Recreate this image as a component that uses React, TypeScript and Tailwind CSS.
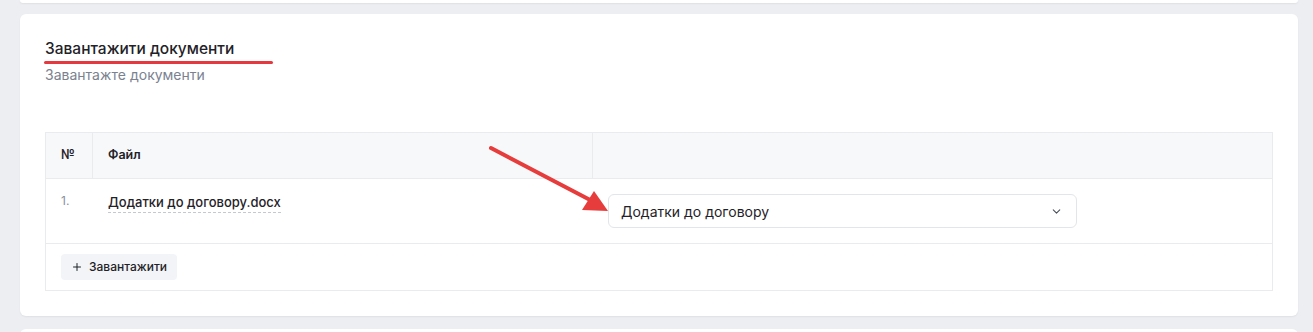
import { ChevronDown, Plus } from "lucide-react"

const font = { fontFamily: "Inter, 'Noto Sans', sans-serif" }

export default function App() {
  return (
    <div className="h-[332px] overflow-hidden bg-[#eceef2]" style={font}>
      {/* попередня картка */}
      <div className="ml-[20px] h-[3px] w-[1278px] rounded-b-md bg-white shadow-[0_1px_2px_rgba(0,0,0,0.06)]" />

      <div className="relative ml-[20px] mt-[11px] w-[1278px] rounded-md bg-white px-[25px] pt-[22px] pb-[25px] shadow-[0_1px_2px_rgba(0,0,0,0.06)]">
        <div className="inline-block">
          <h2 className="text-[15.5px] leading-[22px] font-medium text-[#1f2228]">Завантажити документи</h2>
          <div className="mt-[1px] ml-[-1px] h-[3px] w-[229px] rounded-full bg-[#e5393f]" />
        </div>
        <p className="mt-[1px] text-[14px] leading-[20px] text-[#7a8290]">Завантажте документи</p>

        <div className="mt-[47px] border border-[#e9ebef]">
          <div className="flex h-[46px] border-b border-[#e9ebef] bg-[#f7f8fa] text-[12.5px] font-semibold text-[#1f2228]">
            <div className="flex w-[47px] items-center border-r border-[#e9ebef] pl-[15px]">№</div>
            <div className="flex w-[500px] items-center border-r border-[#e9ebef] pl-[15px]">Файл</div>
            <div className="flex-1" />
          </div>
          <div className="flex h-[65px] border-b border-[#e9ebef]">
            <div className="w-[47px] pl-[15px] pt-[13px] text-[12px] leading-[18px] text-[#8a919c]">1.</div>
            <div className="w-[500px] pl-[15px] pt-[13px] leading-[18px]">
              <span className="border-b border-dashed border-[#c4c8cf] pb-[2px] text-[13px] font-medium text-[#1f2228]">Додатки до договору.docx</span>
            </div>
            <div className="flex-1 pl-[15px] pt-[15px]">
              <div className="flex h-[34px] w-[469px] items-center justify-between rounded-[6px] border border-[#e2e5e9] pl-[12px] pr-[13px] text-[14px] text-[#1f2228]">
                <span>Додатки до договору</span>
                <ChevronDown className="h-[13px] w-[13px] text-[#4b5058]" strokeWidth={2} />
              </div>
            </div>
          </div>
          <div className="flex h-[46px] items-center pl-[15px]">
            <button className="flex h-[26px] items-center gap-[6px] rounded-[4px] bg-[#f2f4f7] px-[10px] text-[12px] font-medium text-[#1f2228]">
              <Plus className="h-[12px] w-[12px]" strokeWidth={2} />
              Завантажити
            </button>
          </div>
        </div>

        {/* стрілка-підказка */}
        <svg className="pointer-events-none absolute left-[466px] top-[128px]" width="140" height="90" viewBox="0 0 140 90">
          <line x1="5" y1="6" x2="108" y2="60" stroke="#e63c3c" strokeWidth="4" strokeLinecap="round" />
          <polygon points="122,69 96,68 108,49" fill="#e63c3c" />
        </svg>
      </div>

      <div className="ml-[20px] mt-[13px] h-[20px] w-[1278px] rounded-t-md bg-white" />
    </div>
  )
}
